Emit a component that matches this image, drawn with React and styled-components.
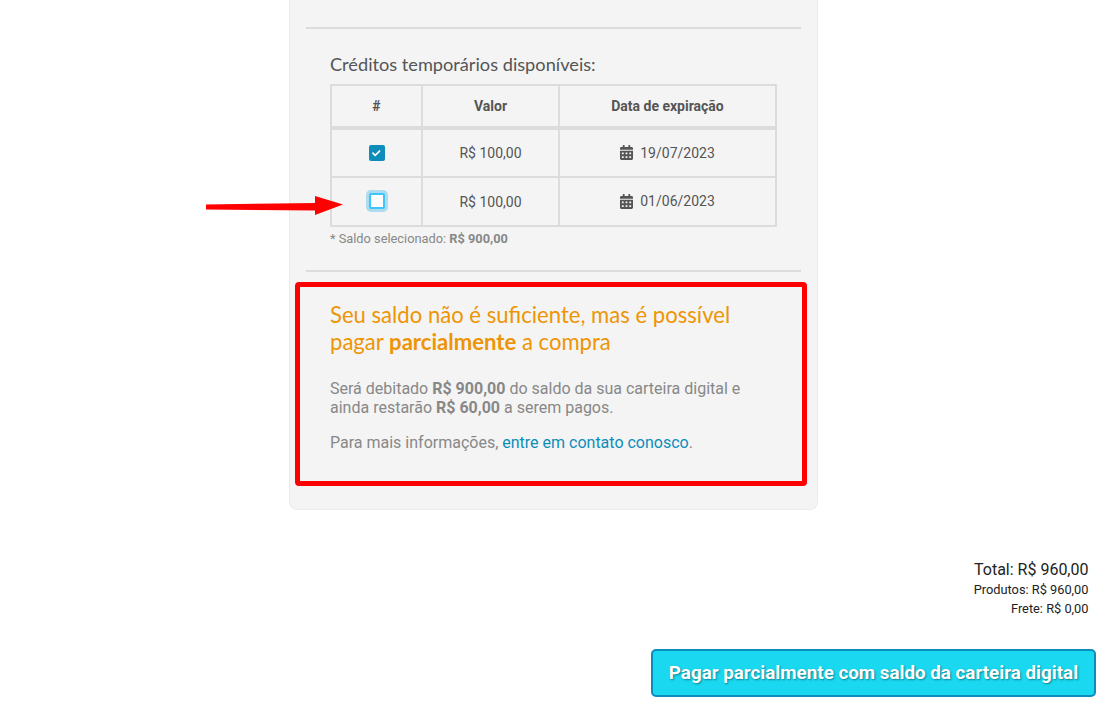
import React from "react"
import styled, { createGlobalStyle } from "styled-components"
import { FaCalendarAlt, FaCheck } from "react-icons/fa"

const GlobalStyle = createGlobalStyle`
  html, body {
    margin: 0;
    padding: 0;
    background: #fff;
    overflow: hidden;
  }
  body {
    font-family: Roboto, "Liberation Sans", sans-serif;
  }
`

const Page = styled.div`
  width: 1107px;
  height: 702px;
  overflow: hidden;
  display: flex;
  flex-direction: column;
`

const Panel = styled.div`
  box-sizing: border-box;
  width: 529px;
  margin-left: 289px;
  height: 510px;
  background: #f4f4f4;
  border: 1px solid #ececec;
  border-top: none;
  border-radius: 0 0 8px 8px;
  padding: 27px 16px 0;
  display: flex;
  flex-direction: column;
`

const Divider = styled.hr`
  width: 100%;
  height: 2px;
  margin: 0;
  border: none;
  background: #dcdcdc;
`

const Credits = styled.section`
  padding: 23px 24px 0;
  height: 241px;
  box-sizing: border-box;
  position: relative;
`

const CreditsTitle = styled.h3`
  margin: 0;
  height: 32px;
  font-family: Lato, sans-serif;
  font-weight: 400;
  font-size: 18.2px;
  line-height: 24px;
  color: #555;
`

const Table = styled.table`
  width: 447px;
  border-collapse: collapse;
  table-layout: fixed;
  border: 2px solid #dcdcdc;
  font-size: 14px;
  color: #555;
`

const Th = styled.th`
  width: ${(p) => p.$w}px;
  height: 40px;
  padding: 0;
  border: 2px solid #dcdcdc;
  border-bottom-width: 4px;
  font-weight: 700;
  font-size: 14px;
  text-align: center;
`

const Row = styled.tr`
  &:last-child td {
    height: 47px;
  }
`

const Td = styled.td`
  height: 46px;
  padding: 0;
  border: 2px solid #dcdcdc;
  text-align: center;
`

const DateCell = styled.span`
  display: inline-flex;
  align-items: center;
  vertical-align: middle;
  margin-bottom: 1px;
  gap: 7px;
  svg {
    width: 13px;
    height: 15px;
  }
`

const CheckBox = styled.span`
  box-sizing: border-box;
  display: inline-flex;
  align-items: center;
  justify-content: center;
  vertical-align: middle;
  margin-bottom: 1px;
  width: 16px;
  height: 16px;
  border-radius: 2px;
  color: #fff;
  background: ${(p) => (p.$checked ? "#0d8dbb" : "#fff")};
  border: ${(p) => (p.$checked ? "none" : "2px solid #40c4ff")};
  box-shadow: ${(p) => (p.$focus ? "0 0 0 3px #acdcee" : "none")};
  svg {
    width: 8.5px;
    height: 8.5px;
  }
`

const Note = styled.p`
  margin: 4px 0 0;
  font-size: 12.8px;
  line-height: 15px;
  color: #888;
`

const Arrow = styled.svg`
  position: absolute;
  left: -100px;
  top: 167px;
  width: 142px;
  height: 26px;
`

const Notice = styled.section`
  box-sizing: border-box;
  width: 512px;
  height: 204px;
  margin: 10px 0 0 -11px;
  padding: 14px 30px 0;
  border: 5px solid #ff0000;
  border-radius: 4px;
`

const NoticeTitle = styled.h2`
  margin: 0;
  font-family: Lato, sans-serif;
  font-weight: 400;
  font-size: 22.1px;
  line-height: 27px;
  color: #ee9505;
`

const NoticeText = styled.p`
  margin: ${(p) => p.$top}px 0 0;
  font-size: 16px;
  line-height: 19px;
  color: #888;
  a {
    color: #0d8dbb;
    text-decoration: none;
  }
`

const Summary = styled.div`
  margin: 50px 18.5px 0 0;
  text-align: right;
  color: #222;
`

const SummaryLine = styled.div`
  font-size: ${(p) => (p.$big ? 16 : 12.8)}px;
  line-height: 19px;
  margin-bottom: ${(p) => (p.$big ? 1 : 0)}px;
`

const ButtonRow = styled.div`
  display: flex;
  justify-content: flex-end;
  margin: 31px 11px 0 0;
`

const PayButton = styled.button`
  box-sizing: border-box;
  width: 445px;
  height: 48px;
  padding: 0;
  background: #19d8ef;
  border: 2px solid #0d8dbb;
  border-radius: 5px;
  color: #fff;
  font-family: Roboto, sans-serif;
  font-weight: 700;
  font-size: 18.8px;
  text-shadow: 1px 1px 2px rgba(0, 0, 0, 0.4);
`

const rows = [
  { date: "19/07/2023", checked: true },
  { date: "01/06/2023", checked: false },
]

export default function App() {
  return (
    <Page>
      <GlobalStyle />
      <Panel>
        <Divider />
        <Credits>
          <CreditsTitle>Créditos temporários disponíveis:</CreditsTitle>
          <Table>
            <thead>
              <tr>
                <Th $w={89}>#</Th>
                <Th $w={135}>Valor</Th>
                <Th>Data de expiração</Th>
              </tr>
            </thead>
            <tbody>
              {rows.map((row) => (
                <Row key={row.date}>
                  <Td>
                    <CheckBox $checked={row.checked} $focus={!row.checked}>
                      {row.checked && <FaCheck />}
                    </CheckBox>
                  </Td>
                  <Td>R$ 100,00</Td>
                  <Td>
                    <DateCell>
                      <FaCalendarAlt />
                      {row.date}
                    </DateCell>
                  </Td>
                </Row>
              ))}
            </tbody>
          </Table>
          <Note>
            * Saldo selecionado: <b>R$ 900,00</b>
          </Note>
          <Arrow viewBox="0 0 142 26">
            <path d="M0 8.5 L110 7 L110 14.5 L0 13.5 Z" fill="#ff0000" />
            <polygon points="109,0 137,8.5 109,19" fill="#ff0000" />
          </Arrow>
        </Credits>
        <Divider />
        <Notice>
          <NoticeTitle>
            Seu saldo não é suficiente, mas é possível pagar <b>parcialmente</b> a compra
          </NoticeTitle>
          <NoticeText $top={24}>
            Será debitado <b>R$ 900,00</b> do saldo da sua carteira digital e ainda restarão{" "}
            <b>R$ 60,00</b> a serem pagos.
          </NoticeText>
          <NoticeText $top={16}>
            Para mais informações, <a href="#contato">entre em contato conosco</a>.
          </NoticeText>
        </Notice>
      </Panel>
      <Summary>
        <SummaryLine $big>Total: R$ 960,00</SummaryLine>
        <SummaryLine>Produtos: R$ 960,00</SummaryLine>
        <SummaryLine>Frete: R$ 0,00</SummaryLine>
      </Summary>
      <ButtonRow>
        <PayButton>Pagar parcialmente com saldo da carteira digital</PayButton>
      </ButtonRow>
    </Page>
  )
}
